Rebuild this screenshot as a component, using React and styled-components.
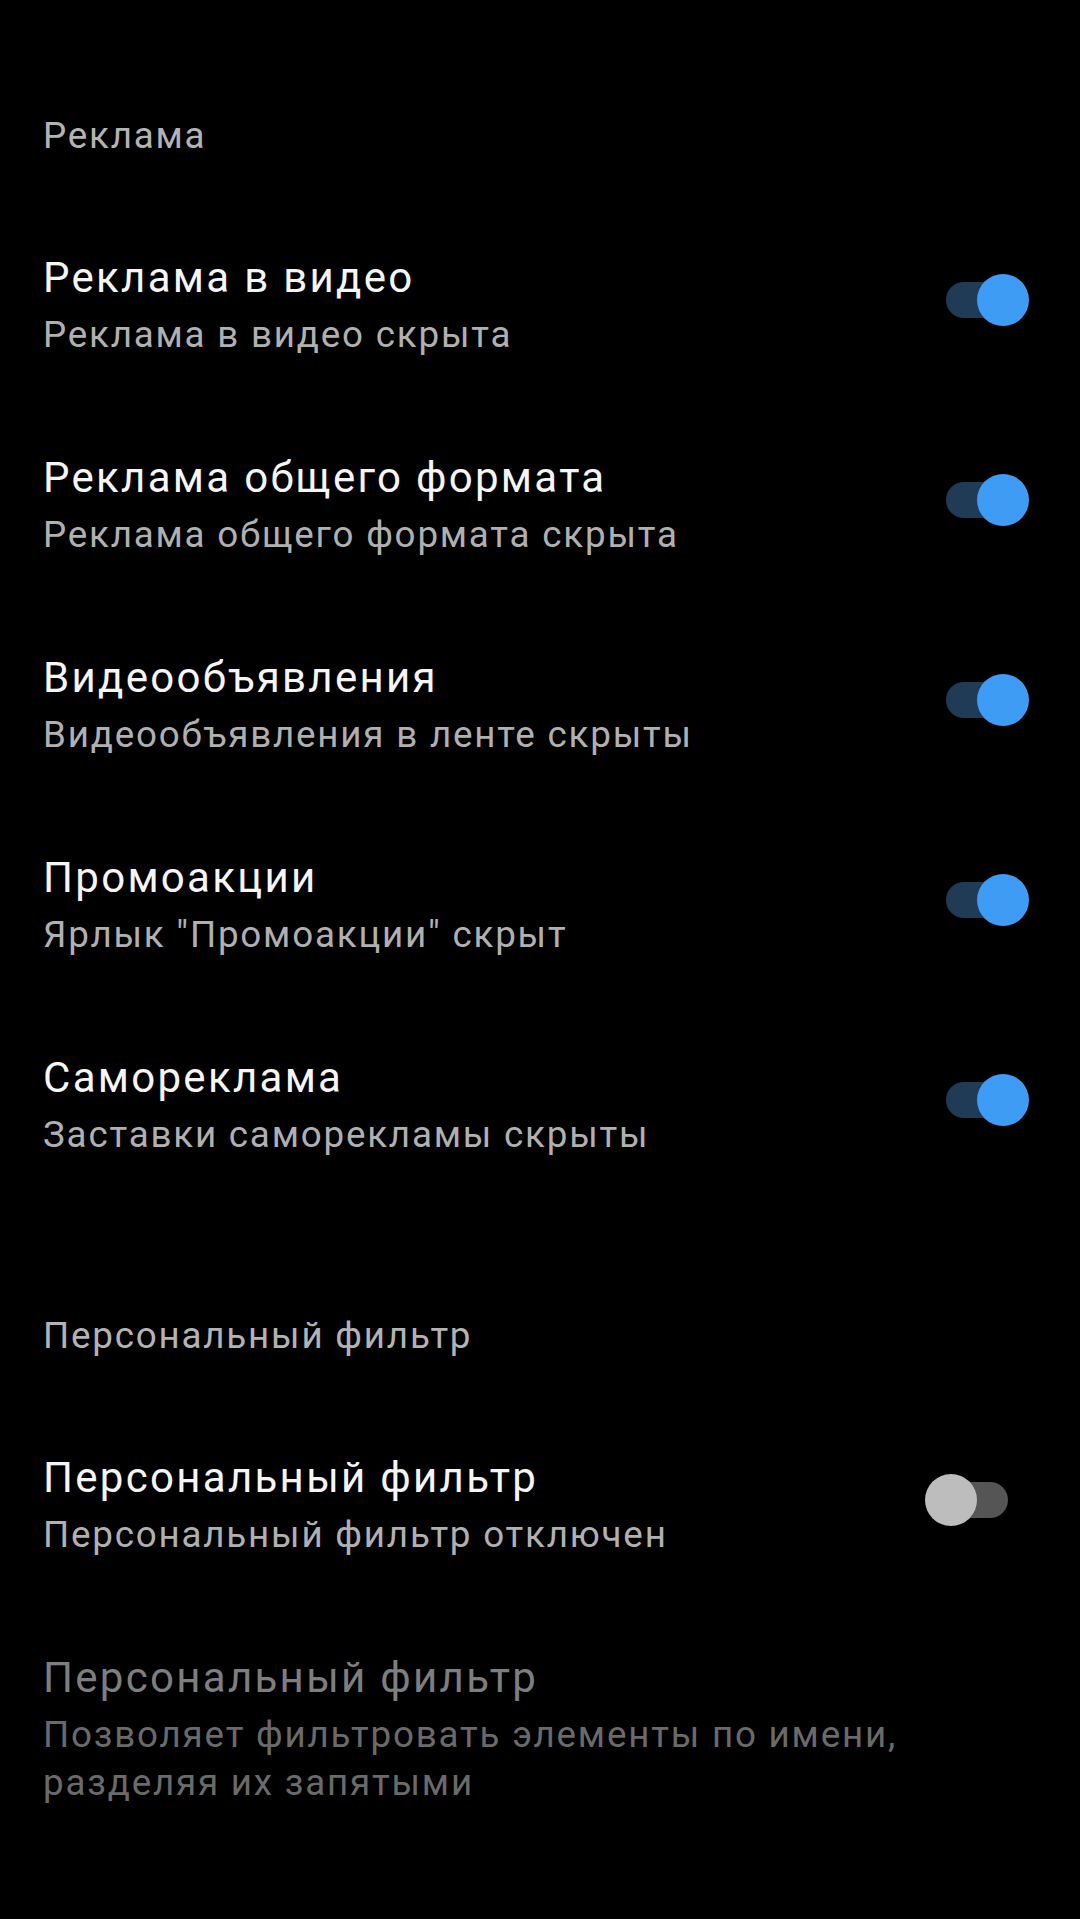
import React from "react";
import styled, { createGlobalStyle } from "styled-components";

const GlobalStyle = createGlobalStyle`
  html, body {
    margin: 0;
    padding: 0;
    background: #000;
  }
  body {
    font-family: Roboto, "Noto Sans", "Liberation Sans", sans-serif;
    -webkit-font-smoothing: antialiased;
  }
`;

const sections = [
  {
    title: "Реклама",
    items: [
      { title: "Реклама в видео", summary: "Реклама в видео скрыта", on: true },
      { title: "Реклама общего формата", summary: "Реклама общего формата скрыта", on: true },
      { title: "Видеообъявления", summary: "Видеообъявления в ленте скрыты", on: true },
      { title: "Промоакции", summary: 'Ярлык "Промоакции" скрыт', on: true },
      { title: "Самореклама", summary: "Заставки саморекламы скрыты", on: true },
    ],
  },
  {
    title: "Персональный фильтр",
    items: [
      { title: "Персональный фильтр", summary: "Персональный фильтр отключен", on: false },
      {
        title: "Персональный фильтр",
        summary: "Позволяет фильтровать элементы по имени, разделяя их запятыми",
        disabled: true,
      },
    ],
  },
];

const Screen = styled.div`
  min-height: 1919px;
  background: #000;
  padding: 6px 43px 0 43px;
  box-sizing: border-box;
`;

const SectionHeader = styled.div`
  padding: 105.7px 0 46.3px 0;
  font-size: 36.75px;
  line-height: 48px;
  letter-spacing: 1.8px;
  color: #b3b3b3;
`;

const Row = styled.div`
  display: flex;
  align-items: center;
  padding: 47.35px 0;
`;

const TextCol = styled.div`
  flex: 1;
  min-width: 0;
`;

const Title = styled.div`
  font-size: 42px;
  line-height: 50px;
  letter-spacing: 2.3px;
  color: ${(p) => (p.$disabled ? "#7e7e7e" : "#f5f5f5")};
`;

const Summary = styled.div`
  margin-top: 7.3px;
  font-size: 36.75px;
  line-height: 48px;
  letter-spacing: 1.8px;
  color: ${(p) => (p.$disabled ? "#6a6a6a" : "#b0b0b0")};
`;

const SwitchBox = styled.div`
  position: relative;
  flex: none;
  width: 83px;
  height: 52px;
  margin-bottom: 11px;
  margin-right: ${(p) => (p.$on ? "8px" : "29px")};
`;

const Track = styled.div`
  position: absolute;
  top: 8px;
  left: ${(p) => (p.$on ? "0" : "17px")};
  width: 66px;
  height: 36px;
  border-radius: 18px;
  background: ${(p) => (p.$on ? "#1f3b56" : "#555555")};
`;

const Thumb = styled.div`
  position: absolute;
  top: 0;
  left: ${(p) => (p.$on ? "31px" : "0")};
  width: 52px;
  height: 52px;
  border-radius: 50%;
  background: ${(p) => (p.$on ? "#3f9cf5" : "#bdbdbd")};
`;

const Switch = ({ on }) => (
  <SwitchBox $on={on}>
    <Track $on={on} />
    <Thumb $on={on} />
  </SwitchBox>
);

export default function App() {
  return (
    <>
      <GlobalStyle />
      <Screen>
        {sections.map((s) => (
          <section key={s.title}>
            <SectionHeader>{s.title}</SectionHeader>
            {s.items.map((it, i) => (
              <Row key={i}>
                <TextCol>
                  <Title $disabled={it.disabled}>{it.title}</Title>
                  <Summary $disabled={it.disabled}>{it.summary}</Summary>
                </TextCol>
                {!it.disabled && <Switch on={it.on} />}
              </Row>
            ))}
          </section>
        ))}
      </Screen>
    </>
  );
}
